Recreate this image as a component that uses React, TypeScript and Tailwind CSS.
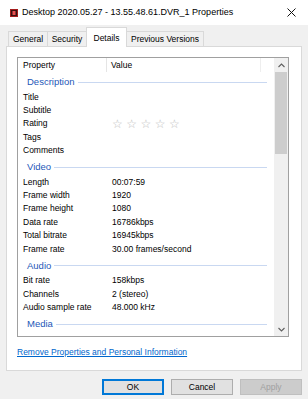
type Row = { label: string; value?: string; stars?: boolean };

type Group = { title: string; rows: Row[] };

const groups: Group[] = [
  {
    title: "Description",
    rows: [
      { label: "Title" },
      { label: "Subtitle" },
      { label: "Rating", stars: true },
      { label: "Tags" },
      { label: "Comments" },
    ],
  },
  {
    title: "Video",
    rows: [
      { label: "Length", value: "00:07:59" },
      { label: "Frame width", value: "1920" },
      { label: "Frame height", value: "1080" },
      { label: "Data rate", value: "16786kbps" },
      { label: "Total bitrate", value: "16945kbps" },
      { label: "Frame rate", value: "30.00 frames/second" },
    ],
  },
  {
    title: "Audio",
    rows: [
      { label: "Bit rate", value: "158kbps" },
      { label: "Channels", value: "2 (stereo)" },
      { label: "Audio sample rate", value: "48.000 kHz" },
    ],
  },
  { title: "Media", rows: [] },
];

const tabs = [
  { name: "General", w: "w-[40px]" },
  { name: "Security", w: "w-[40px]" },
  { name: "Details", w: "w-[41px]", active: true },
  { name: "Previous Versions", w: "w-[78px]" },
];

function GroupHeader({ title }: { title: string }) {
  return (
    <div className="flex h-[18.4px] items-center pl-[9px] pr-[7px] pt-[2px]">
      <span className="text-[9.5px] text-[#2457b8]">{title}</span>
      <div className="ml-[3px] h-px flex-1 bg-[#c9d8f1]" />
    </div>
  );
}

export default function App() {
  return (
    <div className="flex h-[399px] w-[308px] flex-col bg-[#f0f0f0] font-['Liberation_Sans',Arial,sans-serif] text-[8.5px] text-black">
      <header className="flex h-[25px] items-center bg-white">
        <svg className="ml-[10px]" width="8" height="8" viewBox="0 0 8 8">
          <rect x="0" y="0" width="8" height="8" fill="#a31b1b" />
          <rect x="1" y="1" width="6" height="6" fill="#3a1010" />
          <rect x="2.5" y="2" width="3" height="4" fill="#e85050" />
        </svg>
        <span className="ml-[4px] text-[9px]">Desktop 2020.05.27 - 13.55.48.61.DVR_1 Properties</span>
        <svg className="ml-auto mr-[12px]" width="9" height="9" viewBox="0 0 9 9">
          <path d="M0.5 0.5 L8.5 8.5 M8.5 0.5 L0.5 8.5" stroke="#111" strokeWidth="1" />
        </svg>
      </header>

      <div className="mt-[2px] px-[6px]">
        <div className="flex h-[19px] items-end pl-[3px]">
          {tabs.map((t) =>
            t.active ? (
              <div
                key={t.name}
                className={`relative z-10 -mb-px -ml-px flex h-[20px] ${t.w} items-start justify-center border border-b-0 border-[#d9d9d9] bg-white pt-[4px]`}
              >
                {t.name}
              </div>
            ) : (
              <div
                key={t.name}
                className={`-ml-px flex h-[15px] ${t.w} items-center justify-center border border-b-0 border-[#d9d9d9] bg-[#f0f0f0]`}
              >
                {t.name}
              </div>
            )
          )}
        </div>

        <div className="flex h-[325px] flex-col border border-[#d9d9d9] bg-white px-[10px] pt-[10px]">
          <div className="flex h-[280px] w-[272px] border border-[#a0a0a0]">
            <div className="flex-1 overflow-hidden">
              <div className="flex h-[14px] items-center">
                <div className="flex h-full w-[89px] items-center border-r border-[#e5e5e5] pl-[5px]">Property</div>
                <div className="flex h-full w-[154px] items-center border-r border-[#eeeeee] pl-[4px]">Value</div>
              </div>
              {groups.map((g) => (
                <div key={g.title}>
                  <GroupHeader title={g.title} />
                  {g.rows.map((r) => (
                    <div key={r.label} className="flex h-[13.35px] items-center">
                      <div className="w-[90px] pl-[5px]">{r.label}</div>
                      {r.stars ? (
                        <div className="flex gap-[3.5px] pl-[4px] font-['DejaVu_Sans',sans-serif] text-[12px] leading-none text-[#bdbdbd]">
                          <span>☆</span>
                          <span>☆</span>
                          <span>☆</span>
                          <span>☆</span>
                          <span>☆</span>
                        </div>
                      ) : (
                        <div className="pl-[4px]">{r.value}</div>
                      )}
                    </div>
                  ))}
                </div>
              ))}
            </div>
            <div className="flex w-[14px] flex-col bg-[#f0f0f0]">
              <div className="flex h-[14px] items-center justify-center">
                <svg width="7" height="5" viewBox="0 0 7 5">
                  <path d="M0.5 4 L3.5 1 L6.5 4" fill="none" stroke="#606060" strokeWidth="1.1" />
                </svg>
              </div>
              <div className="mx-[1px] h-[82px] bg-[#cdcdcd]" />
              <div className="flex-1" />
              <div className="flex h-[14px] items-center justify-center">
                <svg width="7" height="5" viewBox="0 0 7 5">
                  <path d="M0.5 1 L3.5 4 L6.5 1" fill="none" stroke="#606060" strokeWidth="1.1" />
                </svg>
              </div>
            </div>
          </div>
          <div className="mt-[9px]">
            <span className="cursor-pointer text-[#0066cc] underline">Remove Properties and Personal Information</span>
          </div>
        </div>
      </div>

      <div className="mt-[8px] flex justify-end gap-[7px] pr-[6px]">
        <button className="flex h-[16px] w-[62px] items-center justify-center border border-[#0078d7] bg-[#e1e1e1] outline outline-1 -outline-offset-2 outline-[#0078d7]">
          OK
        </button>
        <button className="flex h-[16px] w-[62px] items-center justify-center border border-[#adadad] bg-[#e1e1e1]">
          Cancel
        </button>
        <button className="flex h-[16px] w-[62px] items-center justify-center border border-[#bfbfbf] bg-[#cccccc] text-[#a0a0a0]">
          Apply
        </button>
      </div>
    </div>
  );
}
